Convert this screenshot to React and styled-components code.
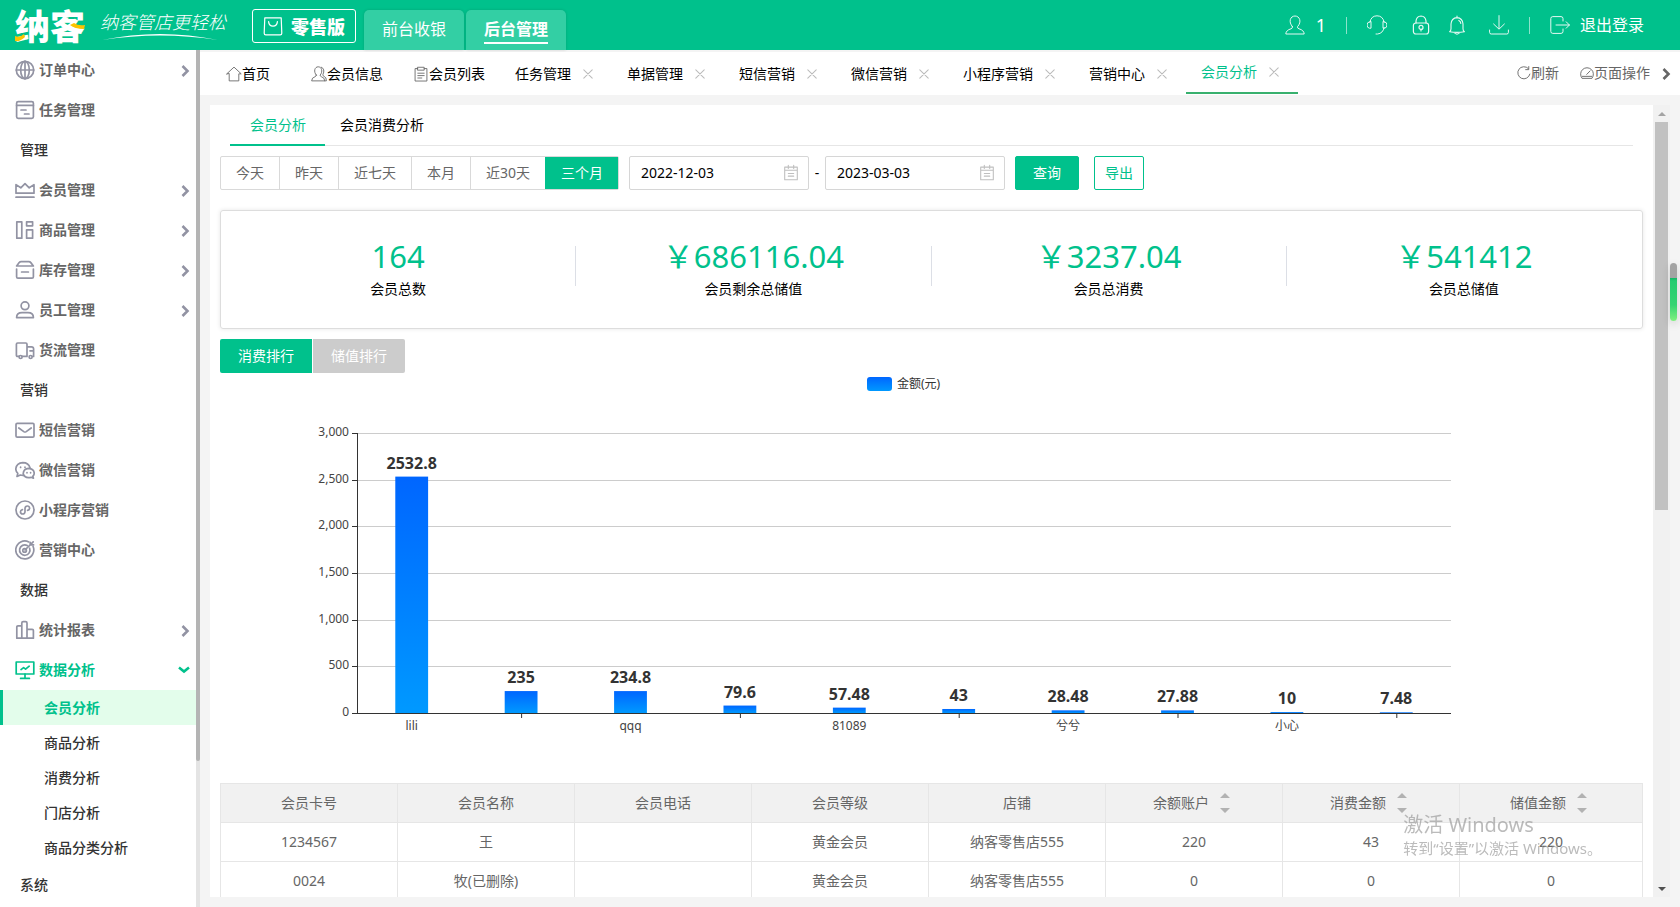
import React from "react";
import styled, { createGlobalStyle, css } from "styled-components";

const GREEN = "#00c18c";
const FONT = `"Noto Sans", "Noto Sans CJK SC", sans-serif`;
const CJK = `"Noto Sans CJK SC", sans-serif`;

const GlobalStyle = createGlobalStyle`
  *, *::before, *::after { box-sizing: border-box; }
  html, body, #root { height: 100%; }
  body {
    margin: 0;
    font-family: ${FONT};
    font-size: 14px;
    line-height: 20px;
    color: #333;
    background: #f4f4f4;
    overflow: hidden;
  }
  button, input { font: inherit; color: inherit; }
  button { padding: 0; border: 0; background: none; cursor: pointer; white-space: nowrap; }
  a { color: inherit; text-decoration: none; }
`;

const Page = styled.div`
  height: 100vh;
  display: flex;
  flex-direction: column;
`;

/* ---------- icons ---------- */

const Svg = styled.svg`
  display: block;
  flex: none;
  fill: none;
  stroke: currentColor;
  stroke-linecap: round;
  stroke-linejoin: round;
`;

function Icon({ size = 20, box = 20, sw = 1.7, children }) {
  return (
    <Svg width={size} height={size} viewBox={`0 0 ${box} ${box}`} strokeWidth={sw} aria-hidden="true">
      {children}
    </Svg>
  );
}

const icons = {
  globe: (
    <>
      <circle cx="10" cy="10" r="8.7" />
      <ellipse cx="10" cy="10" rx="4.3" ry="8.7" />
      <path d="M10 1.3v17.4M1.3 10h17.4" />
    </>
  ),
  task: (
    <>
      <rect x="1.6" y="1.6" width="16.8" height="16.8" rx="1.6" />
      <path d="M1.6 5.4h16.8M6 10h5M9.5 14h4.5" />
    </>
  ),
  crown: (
    <>
      <path d="M1 13.2V4.6l4.8 3.2L10 3.6l4.2 4.2L19 4.6v8.6z" />
      <path d="M1 17.2h18" />
    </>
  ),
  goods: (
    <>
      <rect x="1.8" y="1.8" width="5" height="16.4" />
      <rect x="11.6" y="1.8" width="6" height="4" />
      <rect x="11.6" y="9.8" width="6" height="8.4" />
    </>
  ),
  stock: (
    <>
      <path d="M1.6 9v7.8q0 1.4 1.4 1.4h14q1.4 0 1.4-1.4V9" />
      <path d="M1.6 6 4.200 2.600q.8-1 2-1h7.600q1.200 0 2 1L18.400 6z" />
      <path d="M6.600 12h6.800" />
    </>
  ),
  staff: (
    <>
      <circle cx="10" cy="5.800" r="3.9" />
      <path d="M1.600 17.600q0-5 5.400-5h6q5.400 0 5.400 5z" />
    </>
  ),
  truck: (
    <>
      <path d="M4 16.400H2.600q-1.200 0-1.200-1.200V4.200Q1.400 3 2.600 3h8.200Q12 3 12 4.200v12.200H7.200M12 6.800h4.400q2.200 0 2.200 2.200v7.400h-.8M15 10.800h3.600" />
      <circle cx="5.600" cy="17" r="1.500" />
      <circle cx="15.600" cy="17" r="1.500" />
    </>
  ),
  mail: (
    <>
      <rect x="1" y="3.400" width="18" height="13.800" rx="1.200" />
      <path d="m3.800 8 5 3.600q1.200.8 2.400 0l5-3.600" />
    </>
  ),
  wechat: (
    <>
      <path d="M8.600 15.400q-1.800.1-3.200-.4L2 16.400l.8-3Q.8 11.600.8 9q.6-6 7-6.400Q13.600 2.600 15 7.800" />
      <path d="M13.600 8.400q5.400.4 5.600 4.800 0 1.800-1.300 3l.5 2-2.200-.9q-6.800 1.300-8-3.500.2-5 5.400-5.400z" />
      <path d="M5.600 7.200v.2M10 7.200v.2M12 12.600v.2M15.600 12.600v.2" />
    </>
  ),
  mini: (
    <>
      <circle cx="10" cy="10" r="9" />
      <path d="M12.600 10.400q2-.5 2-2.200Q14.400 6 12.400 6q-2.200 0-2.400 2.400v3.400Q9.600 14 7.600 14q-2-.1-2.200-2.100 0-1.700 2-2.300" />
    </>
  ),
  target: (
    <>
      <path d="M13.800 1.900a9 9 0 1 0 4.300 4.600" />
      <path d="M12.200 5.500a5.200 5.200 0 1 0 2.400 2.700" />
      <circle cx="9.600" cy="10.400" r="1.800" />
      <path d="m10 10 5.600-5.600M15.200 4.800V2.400M15.200 4.800h3.400M15.600 4.400 18.200 1.800" />
    </>
  ),
  chart: <path d="M6.800 18.200V3q0-1.400 1.400-1.400h2.400Q12 1.600 12 3v15.200M6.800 5.800H3q-1.200 0-1.200 1.200v11.200h16.600V10.600q0-1.200-1.200-1.200H12" />,
  monitor: (
    <>
      <rect x="1.200" y="2" width="17.600" height="12" />
      <path d="M10 14v4M5.600 18.400h8.800M6 9.600l2.600-2 2 1.600 3.600-3" />
    </>
  ),
  chevR: <path d="m7.500 6 5 5-5 5" strokeLinecap="butt" strokeLinejoin="miter" />,
  chevD: <path d="m4 7.500 5 4 5-4" strokeLinecap="butt" strokeLinejoin="miter" />,
  bag: (
    <>
      <path d="M1.800 1.800h16.400l.6 15.400q0 1.600-1.600 1.600H2.800q-1.600 0-1.600-1.600z" />
      <path d="M5.600 5.600q.4 4.600 4.400 4.600t4.400-4.600" />
    </>
  ),
  person: <path d="M7.400 11.600C3 6.800 5.400 1 10 1s7 5.800 2.600 10.600q-.6 1.600 1.400 2.200 5 1.400 5.200 5.200H.8q.2-3.800 5.200-5.200 2-.6 1.400-2.200z" />,
  headset: (
    <>
      <path d="M2.800 7.400Q4 .8 10 .8t7.200 6.600M17.200 12.400Q16 18.400 10.600 19H9" />
      <path d="M4 6.800v6.400H2.400Q0 12.800 0 10t2.400-3.200zM16 6.800v6.400h1.600Q20 12.800 20 10t-2.400-3.200z" />
    </>
  ),
  lock: (
    <>
      <rect x="2.400" y="8" width="15.200" height="11" rx="2.500" />
      <path d="M5 8V6q.6-4.800 5-5 4.400.2 5 5v2M10 14.400v1.600" />
      <circle cx="10" cy="12.400" r="2" />
    </>
  ),
  bell: <path d="M2.600 16.800q1.400-1 1.400-3V9Q4.400 3 10 2.600 15.600 3 16 9v4.800q0 2 1.400 3-7.400 1.200-14.800 0zM10 2.600V1M8 18.400q2 1.400 4 0M11.800 5.400q1.800.8 2 3" />,
  download: <path d="M10 .6v13M4.600 9 10 14.200 15.400 9M.6 15v2.400q0 1.600 1.600 1.600h15.600q1.600 0 1.600-1.600V15" />,
  logout: <path d="M13 6V3.600Q13 1.600 11 1.600H2.800q-2 0-2 2v12.800q0 2 2 2H11q2 0 2-2V14M6 10h13.400M16.200 6.800 19.400 10l-3.200 3.200" />,
  home: <path d="M1 9.800 10 1.400l9 8.400h-3v8.800H4V9.800z" />,
  people: <path d="M6.600 11.400C2.800 7 4.600 1 9 1s6.200 6 2.400 10.400q0 1.400 1.600 2 4 1 4.200 5.200H.8q.2-4.200 4.200-5.200 1.600-.6 1.600-2zM12.800 1.400q5.400 2.200 2 9.600 0 1.400 1.600 2 3 1 2.800 5.600h-2" />,
  list: <path d="M6 3.200H2.600v15.600h14.800V3.200H14M6 1.600h8v3.600H6zM6 9h8M6 12h8M6 15h5" />,
  close: <path d="m3 3 14 14M17 3 3 17" />,
  refresh: <path d="M18.400 11.600a8.700 8.700 0 1 1-2.200-8M16.800.8v4.400h-4.400" />,
  gauge: (
    <>
      <path d="M2.600 17.200A9.200 9.200 0 1 1 17.400 17.200z" />
      <path d="m9.600 12 4.800-5M3.400 14.800h13.200" />
    </>
  ),
  calendar: <path d="M3 3.500h14v14H3zM3 7h14M7 1.500V5M13 1.500V5M7 10.500h6M7 13.500h6" />,
};

/* ---------- header ---------- */

const Header = styled.header`
  flex: none;
  height: 50px;
  display: flex;
  align-items: flex-start;
  background: ${GREEN};
  color: #fff;
  white-space: nowrap;
`;

const Logo = styled.a`
  position: relative;
  width: 86px;
  height: 50px;
  padding-left: 15px;
  font: 900 35px/50px ${CJK};
`;

const LogoAccent = styled.svg`
  position: absolute;
  left: 14px;
  top: 10px;
`;

const Slogan = styled.div`
  width: 127px;
  margin: 9px 25px 0 14px;
  font: italic 300 18px/24px ${CJK};
`;

const Swoosh = styled.svg`
  display: block;
`;

const Edition = styled.button`
  display: flex;
  align-items: center;
  gap: 8px;
  height: 34px;
  margin: 9px 8px 0 0;
  padding: 0 10px;
  border: 1px solid #fff;
  border-radius: 3px;
  color: #fff;
  font: 900 18px/24px ${CJK};
`;

const ModeTabs = styled.nav`
  display: flex;
  gap: 2px;
  margin-top: 10px;
`;

const ModeTab = styled.a`
  width: 100px;
  height: 40px;
  display: flex;
  justify-content: center;
  align-items: flex-start;
  padding-top: 6px;
  border-radius: 5px 5px 0 0;
  background: #33cfa4;
  box-shadow: 0 0 3px rgba(0, 0, 0, 0.15);
  font-size: 16px;
  font-weight: ${(p) => (p.$on ? 600 : 400)};
  line-height: 26px;

  span {
    height: 28px;
    border-bottom: ${(p) => (p.$on ? "2px solid #fff" : "0")};
  }
`;

const HeaderTools = styled.div`
  height: 50px;
  margin-left: auto;
  padding-right: 36px;
  display: flex;
  align-items: center;
`;

const Tool = styled.button`
  display: flex;
  align-items: center;
  gap: ${(p) => p.$gap || 0}px;
  margin-left: ${(p) => p.$ml}px;
  color: #fff;
  font-size: ${(p) => p.$fs || 16}px;
  line-height: 24px;

  svg { opacity: 0.9; }
`;

const ToolRule = styled.i`
  width: 1px;
  height: 17px;
  margin-left: 20px;
  background: rgba(255, 255, 255, 0.55);
`;

/* ---------- sidebar ---------- */

const Body = styled.div`
  flex: 1;
  min-height: 0;
  display: flex;
`;

const Sidebar = styled.aside`
  flex: none;
  width: 200px;
  display: flex;
  background: #fff;
`;

const Menu = styled.nav`
  flex: 1;
  overflow: hidden;
`;

const SideTrack = styled.div`
  width: 4px;
  background: #e4e4e4;
`;

const SideThumb = styled.div`
  height: 83%;
  border-radius: 0 0 2px 2px;
  background: #b4b4b4;
`;

const GroupTitle = styled.h2`
  height: 40px;
  margin: 0;
  padding-left: 20px;
  font-size: 14px;
  font-weight: 500;
  line-height: 40px;
`;

const MenuItem = styled.a`
  height: 40px;
  display: flex;
  align-items: center;
  padding: 0 1px 0 15px;
  color: ${(p) => (p.$on ? GREEN : "#9293a3")};
  font-weight: 600;

  span {
    flex: 1;
    margin-left: 4px;
    color: ${(p) => (p.$on ? GREEN : "#666")};
  }
`;

const SubItem = styled.a`
  display: block;
  height: 35px;
  padding-left: 41px;
  border-left: 3px solid ${(p) => (p.$on ? GREEN : "transparent")};
  background: ${(p) => (p.$on ? "#e3fdeb" : "transparent")};
  color: ${(p) => (p.$on ? GREEN : "#333")};
  font-weight: ${(p) => (p.$on ? 600 : 500)};
  line-height: 36px;
`;

/* ---------- page tabs ---------- */

const Main = styled.main`
  flex: 1;
  min-width: 0;
  display: flex;
  flex-direction: column;
`;

const TabBar = styled.div`
  flex: none;
  height: 43px;
  margin-top: 2px;
  padding-left: 11px;
  display: flex;
  background: #fff;
  color: #000;
  white-space: nowrap;
`;

const PinnedTab = styled.a`
  display: flex;
  align-items: center;
  min-width: 85px;
  padding: 0 15px;

  svg { color: #666; }
`;

const PageTab = styled.div`
  display: flex;
  align-items: center;
  gap: 11px;
  height: ${(p) => (p.$on ? 42 : 43)}px;
  padding: 0 18px 0 15px;
  border-bottom: ${(p) => (p.$on ? "2px solid #38b06e" : "0")};
  color: ${(p) => (p.$on ? GREEN : "#000")};
`;

const CloseBtn = styled.button`
  color: #bbb;
`;

const TabActions = styled.div`
  display: flex;
  align-items: center;
  height: 42px;
  margin-left: auto;
  padding-right: 4px;
  color: #666;
`;

const TabAction = styled.button`
  display: flex;
  align-items: center;
  margin-right: ${(p) => p.$mr}px;
`;

/* ---------- content ---------- */

const Frame = styled.div`
  flex: 1;
  min-height: 0;
  margin: 10px;
  display: flex;
`;

const Panel = styled.section`
  flex: 1;
  min-width: 0;
  overflow: hidden;
  padding: 0 10px;
  background: #fff;
`;

const Track = styled.div`
  flex: none;
  width: 17px;
  display: flex;
  flex-direction: column;
  align-items: center;
  background: #f1f1f1;
`;

const Arrow = styled.span`
  width: 17px;
  height: 17px;
  display: flex;
  align-items: center;
  justify-content: center;
  color: ${(p) => (p.$down ? "#505050" : "#a3a3a3")};
  margin-top: ${(p) => (p.$down ? "auto" : 0)};
`;

const Thumb = styled.div`
  width: 13px;
  height: 49%;
  background: #c1c1c1;
`;

const SubTabs = styled.div`
  display: flex;
  height: 41px;
  margin: 0 10px;
  border-bottom: 1px solid #e6e6e6;
`;

const SubTab = styled.button`
  height: 41px;
  padding: 0 ${(p) => (p.$on ? 19 : 15)}px 0 ${(p) => (p.$on ? 20 : 15)}px;
  border-bottom: 2px solid ${(p) => (p.$on ? GREEN : "transparent")};
  color: ${(p) => (p.$on ? GREEN : "#000")};
`;

const Filters = styled.form`
  display: flex;
  align-items: center;
  margin-top: 10px;
`;

const Segments = styled.div`
  display: flex;
  height: 34px;
  margin-right: 10px;
  border: 1px solid #d9d9d9;
  border-radius: 2px;
`;

const Segment = styled.button`
  padding: 0 15px;
  color: #666;

  & + & { border-left: 1px solid #d9d9d9; }

  ${(p) =>
    p.$on &&
    css`
      && { border-left-color: ${GREEN}; }
      background: ${GREEN};
      color: #fff;
    `}
`;

const DateField = styled.label`
  width: 180px;
  height: 34px;
  padding: 0 8px 0 11px;
  display: flex;
  align-items: center;
  border: 1px solid #d6d6d6;
  border-radius: 2px;
  color: #bfbfbf;
`;

const DateInput = styled.input`
  flex: 1;
  min-width: 0;
  padding: 0;
  border: 0;
  outline: 0;
  background: none;
  color: #000;
`;

const Dash = styled.span`
  width: 16px;
  text-align: center;
  color: #000;
`;

const Action = styled.button`
  height: 34px;
  width: ${(p) => (p.$ghost ? 50 : 64)}px;
  margin-left: ${(p) => (p.$ghost ? 15 : 10)}px;
  border: 1px solid ${GREEN};
  border-radius: 2px;
  background: ${(p) => (p.$ghost ? "#fff" : GREEN)};
  color: ${(p) => (p.$ghost ? GREEN : "#fff")};
`;

const Stats = styled.div`
  display: grid;
  grid-template-columns: repeat(4, 1fr);
  height: 119px;
  margin-top: 20px;
  border: 1px solid #ddd;
  border-radius: 3px;
  box-shadow: 0 0 4px rgba(0, 0, 0, 0.1);
`;

const Stat = styled.div`
  display: grid;
  grid-template-columns: 1fr 1px;
  padding-top: 26px;
  text-align: center;

  &::after {
    content: "";
    height: 40px;
    margin-top: 9px;
    background: #dcdfe6;
  }

  &:last-child::after { background: none; }
`;

const StatValue = styled.div`
  color: ${GREEN};
  font-size: 31px;
  line-height: 38px;
`;

const StatLabel = styled.div`
  margin-top: 4px;
  color: #000;
`;

const RankTabs = styled.div`
  display: flex;
  gap: 1px;
  margin-top: 10px;
`;

const RankTab = styled.button`
  width: 92px;
  height: 34px;
  border-radius: ${(p) => (p.$on ? "2px 0 0 2px" : "0 2px 2px 0")};
  background: ${(p) => (p.$on ? GREEN : "#ccc")};
  color: #fff;
`;

const Legend = styled.div`
  display: flex;
  justify-content: center;
  align-items: center;
  gap: 5px;
  height: 14px;
  margin: 4px 56px 42px 0;
  font-size: 12px;
  line-height: 14px;

  i {
    width: 25px;
    height: 14px;
    border-radius: 3px;
    background: linear-gradient(#0066ff, #0099ff);
  }
`;

const Plot = styled.div`
  margin: 0 192px 70px 137px;
`;

const ChartSvg = styled.svg`
  display: block;
  overflow: visible;
  font-family: ${FONT};
  font-size: 12px;
  fill: #444;

  .value { font-size: 16px; font-weight: 700; fill: #333; }
`;

const Table = styled.table`
  width: 100%;
  table-layout: fixed;
  border-collapse: collapse;
  color: #666;

  th, td {
    height: 39px;
    padding: 0;
    border: 1px solid #e6e6e6;
    font-weight: 400;
    text-align: center;
    white-space: nowrap;
  }

  th { background: #f1f1f1; }
  th:last-child { width: 183px; }
`;

const SortButton = styled.button`
  display: inline-flex;
  align-items: center;
  gap: 11px;
  padding-right: 5px;
`;

const SortArrows = styled.svg`
  fill: #b2b2b2;
`;

/* ---------- overlays ---------- */

const Watermark = styled.div`
  position: fixed;
  right: 78px;
  bottom: 48px;
  color: rgba(150, 150, 150, 0.65);
  font-size: 15px;
  line-height: 22px;
  white-space: nowrap;
  pointer-events: none;

  strong {
    display: block;
    font-size: 20px;
    font-weight: 400;
    line-height: 24px;
  }
`;

const Gauge = styled.div`
  position: fixed;
  right: 3px;
  top: 263px;
  width: 7px;
  height: 58px;
  border-radius: 4px;
  background: linear-gradient(#a3a3a3 15px, #12b565 15px, #23cc70 18px, #35d472 42px, #80f080);
  box-shadow: 0 3px 8px rgba(0, 0, 0, 0.15);
`;

/* ---------- data ---------- */

const menu = [
  { icon: "globe", label: "订单中心", more: true },
  { icon: "task", label: "任务管理" },
  { title: "管理" },
  { icon: "crown", label: "会员管理", more: true },
  { icon: "goods", label: "商品管理", more: true },
  { icon: "stock", label: "库存管理", more: true },
  { icon: "staff", label: "员工管理", more: true },
  { icon: "truck", label: "货流管理" },
  { title: "营销" },
  { icon: "mail", label: "短信营销" },
  { icon: "wechat", label: "微信营销" },
  { icon: "mini", label: "小程序营销" },
  { icon: "target", label: "营销中心" },
  { title: "数据" },
  { icon: "chart", label: "统计报表", more: true },
  {
    icon: "monitor",
    label: "数据分析",
    open: true,
    children: ["会员分析", "商品分析", "消费分析", "门店分析", "商品分类分析"],
  },
  { title: "系统" },
];

const pageTabs = ["任务管理", "单据管理", "短信营销", "微信营销", "小程序营销", "营销中心", "会员分析"];
const ranges = ["今天", "昨天", "近七天", "本月", "近30天", "三个月"];
const stats = [
  ["164", "会员总数"],
  ["￥686116.04", "会员剩余总储值"],
  ["￥3237.04", "会员总消费"],
  ["￥541412", "会员总储值"],
];
const bars = [
  ["lili", 2532.8],
  ["", 235],
  ["qqq", 234.8],
  ["", 79.6],
  ["81089", 57.48],
  ["", 43],
  ["兮兮", 28.48],
  ["", 27.88],
  ["小心", 10],
  ["", 7.48],
];
const columns = [
  ["会员卡号"],
  ["会员名称"],
  ["会员电话"],
  ["会员等级"],
  ["店铺"],
  ["余额账户", true],
  ["消费金额", true],
  ["储值金额", true],
];
const rows = [
  ["1234567", "王", "", "黄金会员", "纳客零售店555", "220", "43", "220"],
  ["0024", "牧(已删除)", "", "黄金会员", "纳客零售店555", "0", "0", "0"],
];

function SideMenu() {
  return (
    <Menu>
      {menu.map((m) =>
        m.title ? (
          <GroupTitle key={m.title}>{m.title}</GroupTitle>
        ) : (
          <React.Fragment key={m.label}>
            <MenuItem href="#" $on={m.open}>
              <Icon>{icons[m.icon]}</Icon>
              <span>{m.label}</span>
              {m.more && <Icon sw={2.6}>{icons.chevR}</Icon>}
              {m.open && <Icon sw={2.6}>{icons.chevD}</Icon>}
            </MenuItem>
            {m.children?.map((c, i) => (
              <SubItem href="#" key={c} $on={i === 0}>
                {c}
              </SubItem>
            ))}
          </React.Fragment>
        )
      )}
    </Menu>
  );
}

const CHART_H = 280;
const CHART_MAX = 3000;

function BarChart() {
  const step = 100 / bars.length;
  return (
    <ChartSvg width="100%" height={CHART_H} role="img" aria-label="消费排行">
      <defs>
        <linearGradient id="bar" x1="0" y1="0" x2="0" y2="1">
          <stop offset="0" stopColor="#0066ff" />
          <stop offset="1" stopColor="#0099ff" />
        </linearGradient>
      </defs>
      {[0, 500, 1000, 1500, 2000, 2500, 3000].map((v) => {
        const y = Math.round(CHART_H - (v / CHART_MAX) * CHART_H);
        return (
          <g key={v}>
            {v > 0 && <rect x="0" y={y} width="100%" height="1" fill="#ccc" />}
            <rect x="-5" y={y} width="5" height="1" fill="#333" />
            <text x="-8" y={y + 3} textAnchor="end">
              {v.toLocaleString("en-US")}
            </text>
          </g>
        );
      })}
      {bars.map(([name, v], i) => {
        const h = (v / CHART_MAX) * CHART_H;
        const mid = `${(i + 0.5) * step}%`;
        return (
          <g key={i}>
            <rect x={`${(i + 0.35) * step}%`} y={CHART_H - h} width={`${step * 0.3}%`} height={h} fill="url(#bar)" />
            <text className="value" x={mid} y={CHART_H - h - 8} textAnchor="middle">
              {v}
            </text>
            {name ? (
              <text x={mid} y={CHART_H + 17} textAnchor="middle">
                {name}
              </text>
            ) : (
              <rect x={mid} y={CHART_H + 1} width="1" height="4" fill="#333" />
            )}
          </g>
        );
      })}
      <rect x="0" y="0" width="1" height={CHART_H} fill="#333" />
      <rect x="0" y={CHART_H} width="100%" height="1" fill="#333" />
    </ChartSvg>
  );
}

export default function App() {
  return (
    <Page>
      <GlobalStyle />
      <Header>
        <Logo href="#">
          纳客
          <LogoAccent width="74" height="32" viewBox="0 0 74 32" aria-hidden="true">
            <path d="M1 26q5 2 9-2l1 3q-5 5-10 4z" fill="#fdc400" />
            <path d="M56 15q5 4 14 4l1-4q-7 1-11-2z" fill="#fdc400" />
          </LogoAccent>
        </Logo>
        <Slogan>
          纳客管店更轻松
          <Swoosh width="120" height="8" viewBox="0 0 120 8" fill="#fff" aria-hidden="true">
            <path d="M2 7Q60-5 118 7 60-2 2 7z" />
          </Swoosh>
        </Slogan>
        <Edition>
          <Icon sw={1.2}>{icons.bag}</Icon>
          零售版
        </Edition>
        <ModeTabs>
          <ModeTab href="#">
            <span>前台收银</span>
          </ModeTab>
          <ModeTab href="#" $on>
            <span>后台管理</span>
          </ModeTab>
        </ModeTabs>
        <HeaderTools>
          <Tool $gap={11} $fs={18}>
            <Icon sw={1}>{icons.person}</Icon>1
          </Tool>
          <ToolRule />
          <Tool $ml={20} aria-label="客服">
            <Icon sw={1}>{icons.headset}</Icon>
          </Tool>
          <Tool $ml={24} aria-label="锁屏">
            <Icon sw={1.2}>{icons.lock}</Icon>
          </Tool>
          <Tool $ml={16} aria-label="通知">
            <Icon sw={1.1}>{icons.bell}</Icon>
          </Tool>
          <Tool $ml={22} aria-label="下载">
            <Icon sw={1}>{icons.download}</Icon>
          </Tool>
          <ToolRule />
          <Tool $ml={20} $gap={10}>
            <Icon sw={1}>{icons.logout}</Icon>
            退出登录
          </Tool>
        </HeaderTools>
      </Header>

      <Body>
        <Sidebar>
          <SideMenu />
          <SideTrack>
            <SideThumb />
          </SideTrack>
        </Sidebar>

        <Main>
          <TabBar>
            <PinnedTab href="#">
              <Icon size={16} sw={1.1}>{icons.home}</Icon>首页
            </PinnedTab>
            <PinnedTab href="#">
              <Icon size={16} sw={1.1}>{icons.people}</Icon>会员信息
            </PinnedTab>
            <PinnedTab href="#">
              <Icon size={16} sw={1.1}>{icons.list}</Icon>会员列表
            </PinnedTab>
            {pageTabs.map((t, i) => (
              <PageTab key={t} $on={i === pageTabs.length - 1}>
                <a href="#">{t}</a>
                <CloseBtn aria-label={`关闭${t}`}>
                  <Icon size={12} sw={1.7}>{icons.close}</Icon>
                </CloseBtn>
              </PageTab>
            ))}
            <TabActions>
              <TabAction $mr={21}>
                <Icon size={14} sw={1.3}>{icons.refresh}</Icon>刷新
              </TabAction>
              <TabAction $mr={6}>
                <Icon size={14} sw={1.3}>{icons.gauge}</Icon>页面操作
              </TabAction>
              <TabAction aria-label="更多">
                <Icon sw={2.6}>{icons.chevR}</Icon>
              </TabAction>
            </TabActions>
          </TabBar>

          <Frame>
            <Panel>
              <SubTabs>
                <SubTab $on>会员分析</SubTab>
                <SubTab>会员消费分析</SubTab>
              </SubTabs>

              <Filters onSubmit={(e) => e.preventDefault()}>
                <Segments>
                  {ranges.map((r) => (
                    <Segment type="button" key={r} $on={r === "三个月"}>
                      {r}
                    </Segment>
                  ))}
                </Segments>
                <DateField>
                  <DateInput aria-label="开始日期" defaultValue="2022-12-03" />
                  <Icon size={18} sw={1.2}>{icons.calendar}</Icon>
                </DateField>
                <Dash>-</Dash>
                <DateField>
                  <DateInput aria-label="结束日期" defaultValue="2023-03-03" />
                  <Icon size={18} sw={1.2}>{icons.calendar}</Icon>
                </DateField>
                <Action type="submit">查询</Action>
                <Action type="button" $ghost>
                  导出
                </Action>
              </Filters>

              <Stats>
                {stats.map(([v, l]) => (
                  <Stat key={l}>
                    <div>
                      <StatValue>{v}</StatValue>
                      <StatLabel>{l}</StatLabel>
                    </div>
                  </Stat>
                ))}
              </Stats>

              <RankTabs>
                <RankTab $on>消费排行</RankTab>
                <RankTab>储值排行</RankTab>
              </RankTabs>

              <Legend>
                <i />
                金额(元)
              </Legend>
              <Plot>
                <BarChart />
              </Plot>

              <Table>
                <thead>
                  <tr>
                    {columns.map(([c, sortable]) => (
                      <th key={c} scope="col">
                        {sortable ? (
                          <SortButton>
                            {c}
                            <SortArrows width="10" height="20" viewBox="0 0 10 20" aria-hidden="true">
                              <path d="M0 5 5 0l5 5zM0 15l5 5 5-5z" />
                            </SortArrows>
                          </SortButton>
                        ) : (
                          c
                        )}
                      </th>
                    ))}
                  </tr>
                </thead>
                <tbody>
                  {rows.map((r) => (
                    <tr key={r[0]}>
                      {r.map((c, i) => (
                        <td key={i}>{c}</td>
                      ))}
                    </tr>
                  ))}
                </tbody>
              </Table>
            </Panel>
            <Track>
              <Arrow>
                <svg width="8" height="4" viewBox="0 0 8 4" fill="currentColor" aria-hidden="true">
                  <path d="M0 4 4 0l4 4z" />
                </svg>
              </Arrow>
              <Thumb />
              <Arrow $down>
                <svg width="8" height="4" viewBox="0 0 8 4" fill="currentColor" aria-hidden="true">
                  <path d="m0 0 4 4 4-4z" />
                </svg>
              </Arrow>
            </Track>
          </Frame>
        </Main>
      </Body>

      <Gauge />
      <Watermark>
        <strong>激活 Windows</strong>
        转到“设置”以激活 Windows。
      </Watermark>
    </Page>
  );
}
